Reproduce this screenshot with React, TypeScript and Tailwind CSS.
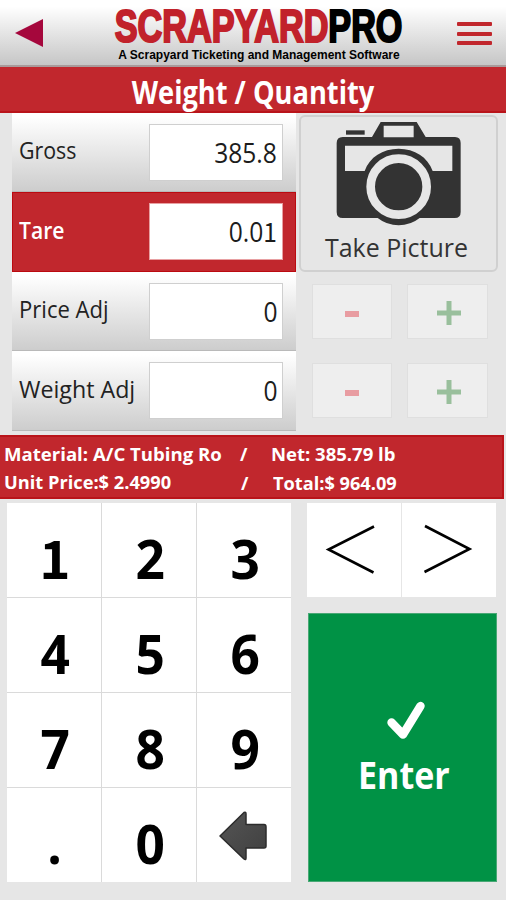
import React from "react";

type RowProps = {
  label: string;
  value: React.ReactNode;
  active?: boolean;
  labelScale: string;
  height: string;
};

function AdjustRow({ label, value, active, labelScale, height }: RowProps) {
  return (
    <div
      className={`flex ${height} justify-between pr-[13px] ${
        active
          ? "border border-[#bb0a10] bg-[#c1272d] pl-[6px] text-white"
          : "border-b border-[#b9b9b9] bg-linear-to-b from-white from-5% to-[#cdcdcd] pl-[7px] text-[#222]"
      }`}
    >
      <span
        className={`origin-left self-center pb-[4px] text-[24px] leading-[30px] whitespace-nowrap ${labelScale} ${
          active ? "font-semibold" : ""
        }`}
      >
        {label}
      </span>
      <div
        className={`flex h-[57px] w-[134px] shrink-0 items-center justify-end border bg-white pr-[5px] ${
          active ? "mt-[10px] -mr-px border-[#e8a0a2]" : "mt-[11px] border-[#cfcfcf]"
        }`}
      >
        <span className="origin-right scale-x-[.91] text-[27px] leading-[30px] text-[#1c1c1c]">{value}</span>
      </div>
    </div>
  );
}

function Stepper() {
  return (
    <div className="flex h-[55px] gap-[15px] pl-[13px]">
      <div className="flex w-[80px] items-center justify-center border border-[#dfdfdf] bg-[#eeeeee]">
        <span className="mt-[4px] h-[6px] w-[14px] bg-[#e89ca1]" />
      </div>
      <div className="flex w-[81px] items-center justify-center border border-[#dfdfdf] bg-[#eeeeee]">
        <svg className="mt-[2px] ml-[2px] h-[24px] w-[24px]" viewBox="0 0 24 24">
          <path d="M9.5 0h5v9.5H24v5h-9.5V24h-5v-9.5H0v-5h9.5z" fill="#99bf9c" />
        </svg>
      </div>
    </div>
  );
}

function Key({ children }: { children: React.ReactNode }) {
  return (
    <div className="flex items-center justify-center bg-white pt-[17px] pl-[2px] text-[53px] leading-[60px] font-bold text-black">
      {children}
    </div>
  );
}

function Digit({ n }: { n: string }) {
  return <span className="scale-x-[.97]">{n}</span>;
}

export default function App() {
  return (
    <div className="flex h-[900px] w-[506px] flex-col overflow-hidden bg-[#e6e6e6] font-['Open_Sans','Noto_Sans',sans-serif]">
      <header className="flex h-[67px] shrink-0 justify-between border-b-2 border-[#a99a9a] bg-linear-to-b from-white from-10% to-[#c6c6c6]">
        <svg className="mt-[19px] ml-[15px] h-[28px] w-[28px]" viewBox="0 0 28 28">
          <path d="M0 14L28 0v28z" fill="#a5073c" />
        </svg>
        <div className="ml-[16px] flex w-[290px] flex-col items-center pt-[4px] pl-[2px] font-['Liberation_Sans',Arial,sans-serif] font-bold whitespace-nowrap">
          <div className="scale-x-[.728] text-[47px] leading-[44px] [-webkit-text-stroke:2.200px_currentColor]">
            <span className="text-[#c1222b]">SCRAPYARD</span>
            <span className="text-black">PRO</span>
          </div>
          <div className="text-[12px] leading-[15px] text-black">A Scrapyard Ticketing and Management Software</div>
        </div>
        <div className="mt-[22px] mr-[14px] flex h-[23px] w-[35px] flex-col justify-between">
          <span className="h-[4px] rounded-[1px] bg-[#c1272d]" />
          <span className="h-[4px] rounded-[1px] bg-[#c1272d]" />
          <span className="h-[4px] rounded-[1px] bg-[#c1272d]" />
        </div>
      </header>

      <div className="flex h-[46px] shrink-0 items-center justify-center border-b-2 border-[#b9141a] bg-[#c1272d] pt-[6px]">
        <h1 className="scale-x-[.825] text-[33px] leading-[38px] font-bold whitespace-nowrap text-white">
          Weight / Quantity
        </h1>
      </div>

      <div className="flex h-[322px] shrink-0 pl-[12px]">
        <div className="w-[284px]">
          <AdjustRow label="Gross" value="385.8" labelScale="scale-x-[.89]" height="h-[79px]" />
          <AdjustRow
            label="Tare"
            value={
              <>
                0.0<span className="font-['Noto_Sans_CJK_SC',sans-serif]">1</span>
              </>
            }
            active
            labelScale="scale-x-[.88]"
            height="h-[80px]"
          />
          <AdjustRow label="Price Adj" value="0" labelScale="scale-x-[.92]" height="h-[79px]" />
          <AdjustRow label="Weight Adj" value="0" labelScale="scale-x-[.967]" height="h-[80px]" />
        </div>
        <div className="w-[210px] pt-[2px] pl-[3px]">
          <div className="flex h-[157px] w-[199px] flex-col items-center rounded-[6px] border-2 border-[#d0d0d0]">
            <svg className="mt-[5px] ml-px h-[104px] w-[126px]" viewBox="121 37 378 312">
              <rect x="151" y="62" width="56" height="13" fill="#333" />
              <path
                fill="#333"
                fillRule="evenodd"
                d="M255 37H363L390 82H478Q495 82 495 100V307Q495 325 477 325H372Q344 347 309 347T246 325H141Q123 325 123 307V100Q123 82 141 82H229ZM264 48V83H354V48ZM148 108V184H207C222 142 261 117 309 117S396 142 411 184H470V108Z"
              />
              <circle cx="309" cy="231" r="84" fill="#333" stroke="#e6e6e6" strokeWidth="26" />
            </svg>
            <span className="mt-[3px] mr-[5px] scale-x-[.96] text-[26px] leading-[36px] whitespace-nowrap text-[#333]">
              Take Picture
            </span>
          </div>
          <div className="mt-[12px] flex flex-col gap-[24px]">
            <Stepper />
            <Stepper />
          </div>
        </div>
      </div>

      <div className="grid h-[64px] w-[504px] shrink-0 grid-cols-[236px_31px_1fr] grid-rows-[28px_28px] border-2 border-l-0 border-[#b9141a] bg-[#c1272d] pt-[3px] pl-[4px] text-[18px] leading-[28px] font-bold whitespace-nowrap text-white">
        <span className="origin-left scale-x-[1.032]">Material: A/C Tubing Ro</span>
        <span>/</span>
        <span className="origin-left scale-x-[1.028]">Net: 385.79 lb</span>
        <span className="origin-left scale-x-[1.013]">Unit Price:$ 2.4990</span>
        <span className="pt-px pl-px">/</span>
        <span className="origin-left scale-x-[1.01] pt-px pl-[2px]">Total:$ 964.09</span>
      </div>

      <div className="flex pt-[4px] pl-[7px]">
        <div className="grid h-[379px] w-[284px] grid-cols-[94px_94px_94px] grid-rows-4 gap-px bg-[#dadada]">
          <Key>
            <span className="-mt-[6px] font-['Noto_Sans_CJK_SC',sans-serif]">1</span>
          </Key>
          <Key><Digit n="2" /></Key>
          <Key><Digit n="3" /></Key>
          <Key><Digit n="4" /></Key>
          <Key><Digit n="5" /></Key>
          <Key><Digit n="6" /></Key>
          <Key><Digit n="7" /></Key>
          <Key><Digit n="8" /></Key>
          <Key><Digit n="9" /></Key>
          <Key><Digit n="." /></Key>
          <Key><Digit n="0" /></Key>
          <div className="bg-white pt-[22px] pl-[21px]">
            <svg className="h-[52px] w-[50px]" viewBox="0 0 50 52">
              <defs>
                <linearGradient id="arrow" x1="0" y1="0" x2="1" y2="1">
                  <stop offset="0" stopColor="#555" />
                  <stop offset="1" stopColor="#3f3f3f" />
                </linearGradient>
              </defs>
              <path
                d="M2 26L26 2.5Q28 1.500 28 4V14.500H46Q48 14.500 48 17V36Q48 38 46 38H28V48Q28 50.500 26 49Z"
                fill="url(#arrow)"
                stroke="#2c2c2c"
                strokeWidth="1.500"
                strokeLinejoin="round"
              />
            </svg>
          </div>
        </div>
        <div className="ml-[16px] w-[190px]">
          <div className="grid h-[94px] w-[189px] grid-cols-2 gap-px bg-[#e6e6e6]">
            <div className="bg-white">
              <svg className="h-[94px] w-[94px]" viewBox="0 0 94 94" fill="none" stroke="#000" strokeWidth="2.600">
                <path d="M67 23.500L21.500 46.500L66.500 69.500" />
              </svg>
            </div>
            <div className="bg-white">
              <svg className="h-[94px] w-[94px]" viewBox="0 0 94 94" fill="none" stroke="#000" strokeWidth="2.600">
                <path d="M23 23L67.500 46L22.500 69" />
              </svg>
            </div>
          </div>
          <div className="mt-[16px] ml-px flex h-[269px] w-[189px] flex-col items-center border border-[#48a875] bg-[#009245] text-white">
            <svg className="mt-[86px] mr-[-6px] h-[40px] w-[40px]" viewBox="0 0 40 40" fill="none">
              <path
                d="M5.500 22.500L17 34.500L34.500 6"
                stroke="#fff"
                strokeWidth="8.400"
                strokeLinecap="round"
                strokeLinejoin="round"
              />
            </svg>
            <span className="mt-[10px] mr-[-2px] scale-x-[.92] text-[37px] leading-[50px] font-bold">Enter</span>
          </div>
        </div>
      </div>
    </div>
  );
}
